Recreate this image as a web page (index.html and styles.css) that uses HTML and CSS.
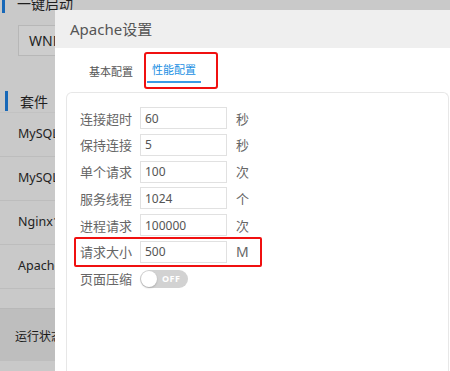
FILE: index.html
```html
<!DOCTYPE html>
<html lang="zh-CN">
<head>
    <meta charset="UTF-8">
    <meta name="viewport" content="width=device-width, initial-scale=1.0">
    <title>Apache设置</title>
    <link rel="stylesheet" href="styles.css">
</head>
<body>
    <aside class="sidebar">
        <div class="side-title top">一键启动</div>
        <div class="start-btn">WNMP</div>

        <div class="side-title">套件</div>
        <ul class="suite-list">
            <li>MySQL</li>
            <li>MySQL</li>
            <li>Nginx1</li>
            <li>Apache</li>
        </ul>

        <div class="status-bar">运行状态</div>
    </aside>

    <div class="dialog">
        <div class="dialog-header">Apache设置</div>

        <div class="tabs">
            <span class="tab">基本配置</span>
            <span class="tab-mark"><span class="tab active">性能配置</span></span>
        </div>

        <div class="panel">
            <div class="row">
                <label>连接超时</label>
                <input type="text" value="60">
                <span class="unit">秒</span>
            </div>
            <div class="row">
                <label>保持连接</label>
                <input type="text" value="5">
                <span class="unit">秒</span>
            </div>
            <div class="row">
                <label>单个请求</label>
                <input type="text" value="100">
                <span class="unit">次</span>
            </div>
            <div class="row">
                <label>服务线程</label>
                <input type="text" value="1024">
                <span class="unit">个</span>
            </div>
            <div class="row">
                <label>进程请求</label>
                <input type="text" value="100000">
                <span class="unit">次</span>
            </div>
            <div class="row marked">
                <label>请求大小</label>
                <input type="text" value="500">
                <span class="unit unit-m">M</span>
            </div>
            <div class="row">
                <label>页面压缩</label>
                <span class="switch"><span class="knob"></span><span class="switch-text">OFF</span></span>
            </div>
        </div>
    </div>
</body>
</html>
```

FILE: styles.css
```css
* {
    margin: 0;
    padding: 0;
    box-sizing: border-box;
}

body {
    font-family: "Noto Sans", "Noto Sans CJK SC", sans-serif;
    background: #c9c9c9;
    width: 450px;
    height: 371px;
    overflow: hidden;
    position: relative;
    color: #222;
}

/* background page, dimmed by the modal */
.sidebar {
    width: 160px;
    height: 371px;
    overflow: hidden;
    background: #c9c9c9;
    padding-top: 1px;
}

.side-title {
    display: flex;
    align-items: center;
    height: 20px;
    font-size: 14px;
    color: #1f1f1f;
    margin: 0 0 0 5px;
    padding-left: 12px;
    border-left: 3px solid #1768b8;
}

.side-title.top {
    margin: -8px 0 0 2px;
}

.start-btn {
    margin: 12px 0 0 18px;
    width: 100px;
    height: 31px;
    line-height: 29px;
    padding-left: 10px;
    border: 1px solid #b7b7b7;
    background: #cdcdcd;
    font-size: 14px;
    color: #1f1f1f;
}

.start-btn + .side-title {
    margin-top: 35px;
}

.suite-list {
    list-style: none;
    margin-top: 1px;
    border-top: 1px solid #c2c2c2;
}

.suite-list li {
    height: 44px;
    line-height: 42px;
    padding-left: 18px;
    font-size: 12.5px;
    color: #222;
    border-bottom: 1px solid #bdbdbd;
}

.status-bar {
    margin-top: 19px;
    height: 53px;
    line-height: 56px;
    background: #bebebe;
    padding-left: 15px;
    font-size: 12px;
    color: #1a1a1a;
    border-top: 1px solid #b8b8b8;
}

/* modal */
.dialog {
    position: absolute;
    left: 55px;
    top: 10px;
    width: 395px;
    height: 361px;
    display: flex;
    flex-direction: column;
    background: #fff;
}

.dialog-header {
    height: 38px;
    line-height: 38px;
    background: #efefef;
    padding-left: 15px;
    font-size: 15px;
    color: #555;
}

.tabs {
    display: flex;
    align-items: flex-start;
    padding: 4px 0 0 29px;
    height: 44px;
    gap: 6px;
}

.tab {
    display: block;
    font-size: 11px;
    line-height: 16px;
    color: #555;
    padding: 10px 5px 3px;
    border-bottom: 2px solid transparent;
}

.tabs > .tab {
    margin-top: 2px;
}

.tab.active {
    color: #1a8fe3;
    border-bottom-color: #3a9be6;
    padding-top: 8px;
}

.tab-mark {
    display: block;
    border: 2px solid #f01010;
    border-radius: 3px;
    padding: 0 15px 4px 1px;
}

.panel {
    flex: 1;
    margin: 0 1px 0 11px;
    border: 1px solid #e7e7e7;
    border-bottom: 0;
    border-radius: 6px 6px 0 0;
    padding: 14px 0 0 13px;
    display: flex;
    flex-direction: column;
    gap: 4.8px;
}

.row {
    display: flex;
    align-items: center;
    height: 22px;
}

.row label {
    width: 60px;
    font-size: 13px;
    color: #666;
}

.row input {
    width: 87px;
    height: 22px;
    border: 1px solid #e1e1e1;
    padding-left: 4px;
    font-family: "Noto Sans", "Noto Sans CJK SC", sans-serif;
    font-size: 12px;
    color: #555;
    outline: none;
}

.unit {
    width: 24px;
    margin-left: 9px;
    font-size: 13px;
    color: #666;
}

.unit-m {
    font-size: 14px;
}

.row.marked {
    width: fit-content;
    height: 30px;
    margin: -4px 0 -4px -6px;
    padding: 2px 0 2px 4px;
    border: 2px solid #f01010;
    border-radius: 2px;
}

.switch {
    position: relative;
    display: block;
    width: 48px;
    height: 18px;
    border-radius: 9px;
    background: #d2d2d2;
}

.knob {
    position: absolute;
    left: 1px;
    top: 1px;
    width: 16px;
    height: 16px;
    border-radius: 50%;
    background: #fff;
    box-shadow: 0 1px 2px rgba(0, 0, 0, 0.2);
}

.switch-text {
    position: absolute;
    left: 22px;
    top: 0;
    line-height: 18px;
    font-size: 9px;
    font-weight: 700;
    color: #fff;
    letter-spacing: 0.5px;
}
```
